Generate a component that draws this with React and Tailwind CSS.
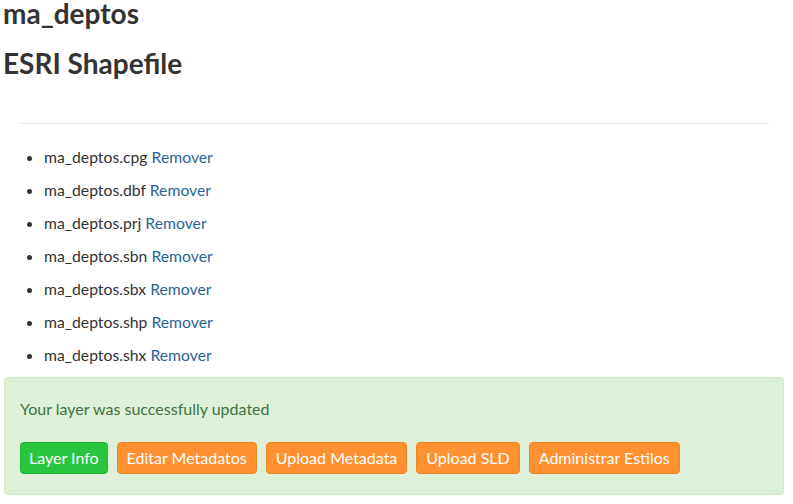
import React from "react";

const files = ["cpg", "dbf", "prj", "sbn", "sbx", "shp", "shx"];
const buttons = [
  { label: "Layer Info", cls: "px-[8px] bg-[#28c63f] border-[#22b537]" },
  { label: "Editar Metadatos", cls: "px-[9px] bg-[#ff9130] border-[#f08526]" },
  { label: "Upload Metadata", cls: "px-[9px] bg-[#ff9130] border-[#f08526]" },
  { label: "Upload SLD", cls: "px-[9px] bg-[#ff9130] border-[#f08526]" },
  { label: "Administrar Estilos", cls: "px-[9px] bg-[#ff9130] border-[#f08526]" },
];

export default function App() {
  return (
    <div className="w-[793px] h-[504px] overflow-hidden bg-white pl-[4px] pr-[9px] text-[#333333] font-['Lato','Noto_Sans',sans-serif]">
      <h2 className="text-[28px] font-bold leading-[30px] -mt-[2px] -ml-[1px]">ma_deptos</h2>
      <h2 className="text-[28px] font-bold leading-[30px] mt-[20px] -ml-[1px]">ESRI Shapefile</h2>

      {/* divider */}
      <div className="mx-[15px] mt-[45px] border-t border-[#e5e5e5]" />

      <ul className="list-disc pl-[40px] mt-[22px] text-[15.75px] leading-[21px]">
        {files.map((ext) => (
          <li key={ext} className="mb-[12px]">
            ma_deptos.{ext} <a className="text-[#2a6496]">Remover</a>
          </li>
        ))}
      </ul>

      {/* success alert */}
      <div className="rounded-[4px] border border-[#d6e9c6] bg-[#dff0d8] px-[15px] pt-[20px] pb-[20px]">
        <p className="text-[16px] leading-[21px] text-[#3c763d]">Your layer was successfully updated</p>
        <div className="mt-[23px] flex gap-[9px]">
          {buttons.map((b) => (
            <button
              key={b.label}
              className={`h-[32px] rounded-[4px] border text-[16px] text-white ${b.cls}`}
            >
              {b.label}
            </button>
          ))}
        </div>
      </div>
    </div>
  );
}
